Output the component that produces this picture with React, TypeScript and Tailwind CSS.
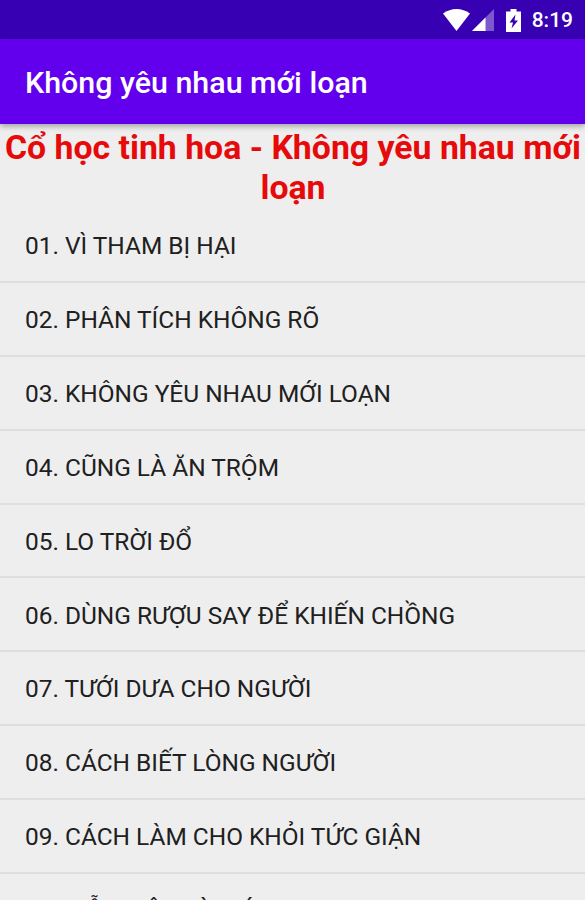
import React from "react";

const chapters = [
  "01. VÌ THAM BỊ HẠI",
  "02. PHÂN TÍCH KHÔNG RÕ",
  "03. KHÔNG YÊU NHAU MỚI LOẠN",
  "04. CŨNG LÀ ĂN TRỘM",
  "05. LO TRỜI ĐỔ",
  "06. DÙNG RƯỢU SAY ĐỂ KHIẾN CHỒNG",
  "07. TƯỚI DƯA CHO NGƯỜI",
  "08. CÁCH BIẾT LÒNG NGƯỜI",
  "09. CÁCH LÀM CHO KHỎI TỨC GIẬN",
  "10. MẪU MÂU LÀ MÁU",
];

const StatusBar = () => {
  return (
    <div className="flex h-[39px] shrink-0 items-center justify-end bg-[#3700b3] pr-3 pt-px text-white">
      <svg className="h-[22px] w-[27px]" viewBox="0 0 27 22">
        <path d="M0 4.500C8-1.500 19-1.500 27 4.500L13.500 22Z" fill="#fff" />
      </svg>
      <svg className="ml-[2px] h-[22px] w-[22px]" viewBox="0 0 22 22">
        <path d="M22 0V22H0Z" fill="#fff" fillOpacity="0.35" />
        <path d="M13.500 8.500V22H0Z" fill="#fff" />
      </svg>
      <svg className="ml-[12px] h-[23px] w-[15px]" viewBox="0 0 15 23">
        <path d="M4.500 0h6v2.500H15V23H0V2.500h4.500z" fill="#fff" />
        <path d="M9.500 5.500L3.500 13.500H7L5.500 19.500L12 11.500H8.500z" fill="#3700b3" />
      </svg>
      <span className="ml-[11px] text-[21px] font-medium leading-none">8:19</span>
    </div>
  );
};

const App = () => {
  return (
    <div className="flex h-[900px] w-[585px] flex-col overflow-hidden bg-[#eeeeee] font-[Roboto,sans-serif]">
      <StatusBar />
      <header className="z-10 flex h-[85px] shrink-0 items-center bg-[#6200ee] pl-[25px] pt-[3px] shadow-[0_2px_6px_rgba(0,0,0,0.35)]">
        <h1 className="text-[30.400px] font-medium text-white">Không yêu nhau mới loạn</h1>
      </header>
      <h2 className="h-[85px] shrink-0 pl-px pt-[4px] text-center text-[33.800px] font-bold leading-[40px] text-[#e60a0a]">
        Cổ học tinh hoa - Không yêu nhau mới loạn
      </h2>
      <ul>
        {chapters.map((chapter) => (
          <li
            key={chapter}
            className="flex h-[73.900px] items-center whitespace-nowrap border-b-2 border-[#dedede] pl-[25px] pt-[3px] text-[24.450px] text-[#202020]"
          >
            {chapter}
          </li>
        ))}
      </ul>
    </div>
  );
};

export default App;
